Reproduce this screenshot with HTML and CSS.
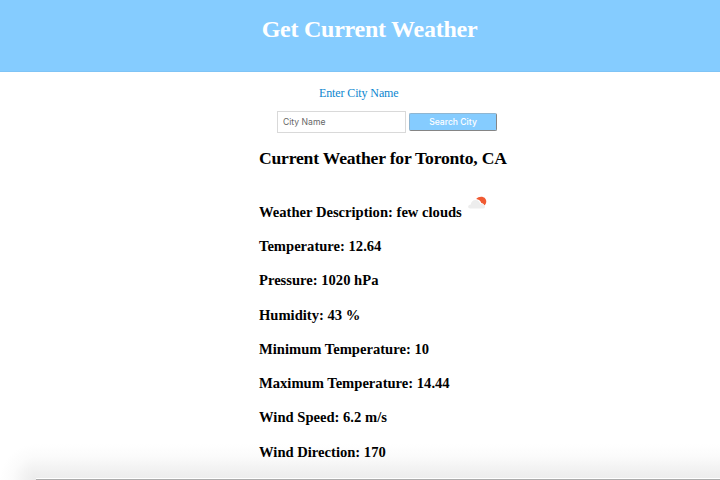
FILE: index.html
```html
<!DOCTYPE html>
<html lang="en"><head><meta charset="utf-8"><title>Get Current Weather</title>
<link rel="stylesheet" href="styles.css"></head>
<body>
<header class="banner"><h1>Get Current Weather</h1></header>
<form class="search">
<label for="city">Enter City Name</label>
<div class="row"><input id="city" type="text" placeholder="City Name"><button type="button">Search City</button></div>
</form>
<main class="report">
<h2>Current Weather for Toronto, CA</h2>
<p class="desc"><span>Weather Description: few clouds</span>
<svg class="icon" width="22" height="16" viewBox="0 0 22 16"><path d="M9.200 3C11.500 .2 16 .1 18 2.300C20 4.500 19.700 7.500 17.500 9.600C16.800 8 15.800 7.200 14.300 7C13.700 5 11.800 3.300 9.200 3Z" fill="#f05a32"/><path d="M3.500 12.500C.2 12.500 .5 8.500 3.800 8.500C4.200 5.500 6 4 8.300 4C11 4 12.700 5.600 13.200 7.700C15.500 7.500 18 9 18 10.700C18 12 17 12.500 15.500 12.500Z" fill="#ededed"/></svg></p>
<p>Temperature: 12.64</p>
<p>Pressure: 1020 hPa</p>
<p>Humidity: 43 %</p>
<p>Minimum Temperature: 10</p>
<p>Maximum Temperature: 14.44</p>
<p>Wind Speed: 6.2 m/s</p>
<p>Wind Direction: 170</p>
</main>
<div class="shade"></div>
</body></html>
```
FILE: styles.css
```css
* { box-sizing: border-box; }
body { margin: 0; height: 480px; overflow: hidden; background: #fff; font-family: "Liberation Serif", serif; display: flex; flex-direction: column; position: relative; }
.banner { height: 72px; flex: none; background: #85ccff; border-bottom: 1px solid #7fc4f6; color: #fff; padding-top: 15px; padding-left: 19px; text-align: center; }
h1 { margin: 0; font-size: 24px; line-height: 28px; letter-spacing: -0.25px; }
.search { height: 61px; flex: none; padding: 13px 0 0 277px; }
label { display: block; margin-left: 42px; font-size: 12px; line-height: 16px; letter-spacing: -0.12px; color: #0b86d0; }
.row { display: flex; gap: 3px; margin-top: 10px; }
input { width: 129px; height: 22px; border: 1px solid #d9d9d9; padding: 0 5px; font: 8.6px Inter, "Liberation Sans", sans-serif; }
input::placeholder { color: #666; }
button { width: 88px; height: 18px; margin-top: 2px; padding: 0; border: 1px solid; border-color: #8fb6d2 #858585 #858585 #8fb6d2; border-radius: 2px; background: #85ccff; color: #fff; font: 500 8.6px Inter, "Liberation Sans", sans-serif; }
.report { padding: 15px 0 0 259px; color: #000; position: relative; z-index: 1; }
h2 { margin: 0 0 33.7px; font-size: 17.6px; line-height: 20px; letter-spacing: -0.2px; white-space: nowrap; }
.report p { margin: 0 0 14.3px; height: 20px; font-size: 14.6px; font-weight: bold; line-height: 20px; white-space: nowrap; }
.report .desc { display: flex; gap: 5px; }
.icon { margin-top: -6px; flex: none; }
.shade { position: absolute; left: 0; right: 0; bottom: 0; height: 36px;
  background:
    linear-gradient(#ababab, #ababab) 36px 35px / 100% 1px no-repeat,
    linear-gradient(#fff, #fff) 36px 34px / 100% 1px no-repeat,
    radial-gradient(36px 36px at 36px 36px, #ebebeb, #f3f3f3 35%, #fbfbfb 65%, #fff) 0 0 / 36px 36px no-repeat,
    linear-gradient(to top, #ebebeb, #f3f3f3 35%, #fbfbfb 65%, #fff) 36px 0 / 100% 36px no-repeat; }
```
